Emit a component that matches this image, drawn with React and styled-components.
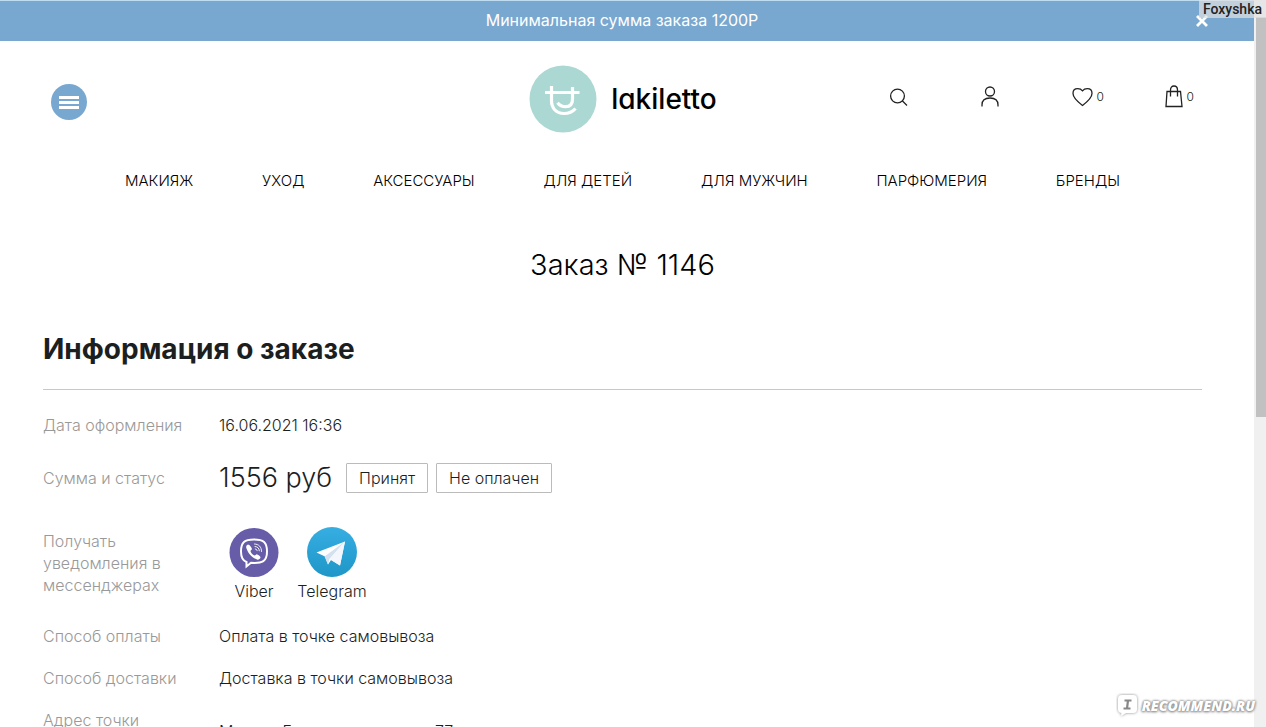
import React from 'react';
import styled, { createGlobalStyle } from 'styled-components';

// Global styles
const GlobalStyle = createGlobalStyle`
  * {
    box-sizing: border-box;
  }

  body {
    margin: 0;
    background: #fff;
    color: #1c1f1f;
    font-family: Inter, 'Liberation Sans', sans-serif;
    font-size: 16px;
    font-weight: 300;
    line-height: 22px;
  }
`;

// Styled Components
const Frame = styled.div`
  position: relative;
  display: flex;
  height: 100vh;
  overflow: hidden;
`;

const Page = styled.div`
  flex: 1;
  min-width: 0;
`;

const TopBar = styled.div`
  display: flex;
  align-items: center;
  height: 41px;
  padding: 0 46px 0 48px;
  border-top: 1px solid #bfdcf0;
  background: #78a7d0;
  color: #fff;
  font-weight: 400;
`;

const TopText = styled.p`
  flex: 1;
  margin: 0;
  padding-bottom: 2px;
  text-align: center;
`;

const IconButton = styled.button`
  display: flex;
  align-items: center;
  gap: 4px;
  padding: 0;
  border: none;
  background: none;
  color: inherit;
  font: inherit;
  cursor: pointer;
`;

const Header = styled.header`
  display: grid;
  grid-template-columns: 1fr auto 1fr;
  align-items: center;
  height: 116px;
  padding: 0 60px 0 52px;
`;

const MenuButton = styled.button`
  display: flex;
  flex-direction: column;
  align-items: center;
  justify-content: center;
  gap: 2px;
  width: 36px;
  height: 36px;
  margin: 6px 0 0 -1px;
  padding: 0;
  border: none;
  border-radius: 50%;
  background: #78a7d0;
  cursor: pointer;
`;

const MenuLine = styled.span`
  width: 20px;
  height: 3px;
  background: #fff;
`;

const Logo = styled.a`
  display: flex;
  align-items: center;
  gap: 14px;
  color: #000;
  font-size: 28px;
  font-weight: 500;
  font-feature-settings: 'cv11';
  line-height: 36px;
  text-decoration: none;
`;

const Tools = styled.div`
  display: grid;
  grid-template-columns: 92px 91px 93px auto;
  align-items: center;
  justify-content: end;
  padding-bottom: 5px;
  color: #222;
  font-size: 12px;
`;

const Nav = styled.nav`
  display: flex;
  justify-content: space-between;
  padding: 13px 134px 0 125px;
`;

const NavLink = styled.a`
  color: #000;
  font-size: 15px;
  text-decoration: none;
`;

const Title = styled.h1`
  margin: 53px 0 0;
  padding-right: 9px;
  color: #000;
  font-size: 29px;
  font-weight: 300;
  line-height: 40px;
  text-align: center;
`;

const Order = styled.main`
  padding: 46px 52px 0 43px;
`;

const SectionTitle = styled.h2`
  margin: 0;
  padding-bottom: 22px;
  border-bottom: 1px solid #c8c8c8;
  font-size: 28px;
  font-weight: 700;
  line-height: 36px;
`;

const Details = styled.dl`
  display: flex;
  flex-direction: column;
  gap: 20px;
  margin: 24px 0 0;
`;

const Row = styled.div`
  display: flex;
  align-items: ${({ $align }) => $align || 'flex-start'};
  min-height: ${({ $height }) => $height || 22}px;
`;

const Label = styled.dt`
  flex: none;
  width: 176px;
  padding-right: 24px;
  color: #999;
`;

const Value = styled.dd`
  display: flex;
  align-items: center;
  gap: 8px;
  margin: 0;
`;

const Price = styled.span`
  margin-right: 6px;
  font-size: 27px;
  line-height: 36px;
`;

const Status = styled.span`
  padding: 3px 12px;
  border: 1px solid #bbb;
  border-radius: 1px;
`;

const Messenger = styled.a`
  display: flex;
  flex-direction: column;
  align-items: center;
  gap: 3px;
  width: 70px;
  padding-top: 4px;
  color: inherit;
  text-decoration: none;
`;

const Scrollbar = styled.div`
  flex: none;
  width: 12px;
  padding: 17px 0 0 2px;
  background: #f0f0f0;
`;

const Thumb = styled.div`
  height: 400px;
  background: #c1c1c1;
`;

const UserTag = styled.span`
  position: absolute;
  top: 0;
  right: 0;
  padding: 1px 4px 0 4px;
  background: rgba(225, 225, 225, 0.7);
  color: #222;
  font-family: Roboto, sans-serif;
  font-size: 14px;
  font-weight: 500;
  line-height: 17px;
`;

const Watermark = styled.span`
  position: absolute;
  right: 11px;
  bottom: 8px;
  display: flex;
  align-items: center;
  gap: 2px;
  color: #fff;
  font-family: 'Open Sans', sans-serif;
  font-size: 14px;
  font-style: italic;
  font-weight: 800;
  text-shadow: 0 0 2px #888, 0 0 3px #888, 0 1px 3px #999;
`;

const links = ['Макияж', 'Уход', 'Аксессуары', 'Для детей', 'Для мужчин', 'Парфюмерия', 'Бренды'];

const CloseIcon = () => (
  <svg width="12" height="12" viewBox="0 0 12 12" stroke="#fff" strokeWidth="2.8">
    <path d="M1 1l10 10M11 1L1 11" />
  </svg>
);

const LogoMark = () => (
  <svg width="68" height="68" viewBox="0 0 68 68" fill="none" stroke="#fff" strokeWidth="3.2">
    <circle cx="34" cy="34" r="33.5" fill="#acd8d3" stroke="none" />
    <path d="M16 27.500h34.500M22.500 21v14.500c0 8 5 13 12.500 13 5 0 8.500-1.500 11.500-5" />
    <path d="M43.500 21v12c0 5-2.500 7.700-6.800 7.700-3.500 0-6-1.200-8.200-4" transform="translate(0 1)" />
  </svg>
);

const SearchIcon = () => (
  <svg width="19" height="20" viewBox="0 0 19 20" fill="none" stroke="currentColor" strokeWidth="1.3">
    <circle cx="8.5" cy="9" r="6.9" />
    <path d="M13 13.5l5 5" />
  </svg>
);

const UserIcon = () => (
  <svg width="18" height="22" viewBox="0 0 18 22" fill="none" stroke="currentColor" strokeWidth="1.3">
    <circle cx="9" cy="5.5" r="4.5" />
    <path d="M1 20.500v-1.500c0-4.500 3-7 8-7s8 2.500 8 7v1.500" />
  </svg>
);

const HeartIcon = () => (
  <svg width="21" height="20" viewBox="0 0 21 20" fill="none" stroke="currentColor" strokeWidth="1.3">
    <path d="M10.5 18.500C4 13.500 1 10.500 1 6.500 1 3.500 3 1.700 5.700 1.700c2 0 3.600.6 4.800 2.100 1.200-1.500 2.800-2.100 4.800-2.100C18 1.700 20 3.500 20 6.500c0 4-3 7-9.500 12z" />
  </svg>
);

const BagIcon = () => (
  <svg width="18" height="24" viewBox="0 0 18 24" fill="none" stroke="currentColor" strokeWidth="1.3">
    <path d="M2 6.500h13.500L17 21.500H1z" />
    <path d="M5.500 11.500V5c0-2.500 1.200-4 3.500-4s3.500 1.500 3.500 4v6.500" />
  </svg>
);

const ViberIcon = () => (
  <svg width="50" height="50" viewBox="0 0 50 50" fill="none" stroke="#fff" strokeLinecap="round">
    <circle cx="25" cy="25.5" r="24.5" fill="#665ca7" stroke="none" />
    <path
      d="M25 12.500c-9.500 0-13 2.500-13 12 0 6 1.500 9 5.500 10.500v4.500l4.500-3.700c11.500.8 16-1.500 16-11.300 0-9.500-3.500-12-13-12z"
      strokeWidth="2"
    />
    <path
      d="M19 17.500c-1.800.8-2.200 2-1.500 4 2 5.500 5 8.700 10.500 11 1.500.6 2.800-.3 3.500-2 .4-1-2.500-3-3.700-3.300-1 0-1.500 1.500-2.300 1.300-2-.8-3.500-2.500-4-4.300 0-1 1.500-1.200 1.500-2.200-.3-1.300-2.500-4.500-4-4.500z"
      fill="#fff"
      stroke="none"
    />
    <path d="M25.500 17c4.500.2 7 2.800 7 7.500M26 19.500c2.800.2 4.200 1.800 4.300 4.300M26.300 22c1.200.1 1.700.7 1.800 1.700" strokeWidth="0.9" />
  </svg>
);

const TelegramIcon = () => (
  <svg width="50" height="50" viewBox="0 0 50 50">
    <defs>
      <linearGradient id="telegram" x1="0" y1="0" x2="0" y2="1">
        <stop offset="0" stopColor="#37aee2" />
        <stop offset="1" stopColor="#1e96c8" />
      </linearGradient>
    </defs>
    <circle cx="25" cy="25" r="25" fill="url(#telegram)" />
    <path d="M9.500 25.500L38 14.500l-5 24-9-5.500-3 4.500-3-8z" fill="#fff" />
    <path d="M17.500 29.500L38 14.500 22.500 32l-1.500 5.500z" fill="#d3e1ef" />
    <path d="M22.500 32L38 14.500l-5 24z" fill="#f3f6fc" />
  </svg>
);

const BubbleIcon = () => (
  <svg width="24" height="26" viewBox="0 0 24 26">
    <defs>
      <filter id="bubble-shadow" x="-30%" y="-30%" width="160%" height="160%">
        <feDropShadow dx="0" dy="0" stdDeviation="1.5" floodColor="#888" />
      </filter>
    </defs>
    <path
      d="M6 2h11q4 0 4 4v10q0 4-4 4h-7l-5 3 .5-3Q2 19.500 2 16V6q0-4 4-4z"
      fill="#fff"
      filter="url(#bubble-shadow)"
    />
    <path d="M8.500 7.500h7M7.500 15.500h7M12 7.500l-1 8" stroke="#888" strokeWidth="2.2" />
  </svg>
);

const App = () => {
  return (
    <Frame>
      <GlobalStyle />
      <Page>
        <TopBar>
          <TopText>Минимальная сумма заказа 1200Р</TopText>
          <IconButton aria-label="Закрыть">
            <CloseIcon />
          </IconButton>
        </TopBar>
        <Header>
          <MenuButton aria-label="Меню">
            <MenuLine />
            <MenuLine />
            <MenuLine />
          </MenuButton>
          <Logo href="#">
            <LogoMark />
            lakiletto
          </Logo>
          <Tools>
            <IconButton aria-label="Поиск">
              <SearchIcon />
            </IconButton>
            <IconButton aria-label="Профиль">
              <UserIcon />
            </IconButton>
            <IconButton aria-label="Избранное">
              <HeartIcon />0
            </IconButton>
            <IconButton aria-label="Корзина">
              <BagIcon />0
            </IconButton>
          </Tools>
        </Header>
        <Nav>
          {links.map((link) => (
            <NavLink href="#" key={link}>
              {link.toUpperCase()}
            </NavLink>
          ))}
        </Nav>
        <Title>Заказ № 1146</Title>
        <Order>
          <SectionTitle>Информация о заказе</SectionTitle>
          <Details>
            <Row>
              <Label>Дата оформления</Label>
              <Value>16.06.2021 16:36</Value>
            </Row>
            <Row $align="center" $height={44}>
              <Label>Сумма и статус</Label>
              <Value>
                <Price>1556 руб</Price>
                <Status>Принят</Status>
                <Status>Не оплачен</Status>
              </Value>
            </Row>
            <Row $align="center" $height={85}>
              <Label>Получать уведомления в мессенджерах</Label>
              <Value>
                <Messenger href="#">
                  <ViberIcon />
                  Viber
                </Messenger>
                <Messenger href="#">
                  <TelegramIcon />
                  Telegram
                </Messenger>
              </Value>
            </Row>
            <Row>
              <Label>Способ оплаты</Label>
              <Value>Оплата в точке самовывоза</Value>
            </Row>
            <Row>
              <Label>Способ доставки</Label>
              <Value>Доставка в точки самовывоза</Value>
            </Row>
            <Row $align="center">
              <Label>Адрес точки самовывоза</Label>
              <Value>Москва Бакунинская улица 77</Value>
            </Row>
          </Details>
        </Order>
      </Page>
      <Scrollbar>
        <Thumb />
      </Scrollbar>
      <UserTag>Foxyshka</UserTag>
      <Watermark>
        <BubbleIcon />
        RECOMMEND.RU
      </Watermark>
    </Frame>
  );
};

export default App;
